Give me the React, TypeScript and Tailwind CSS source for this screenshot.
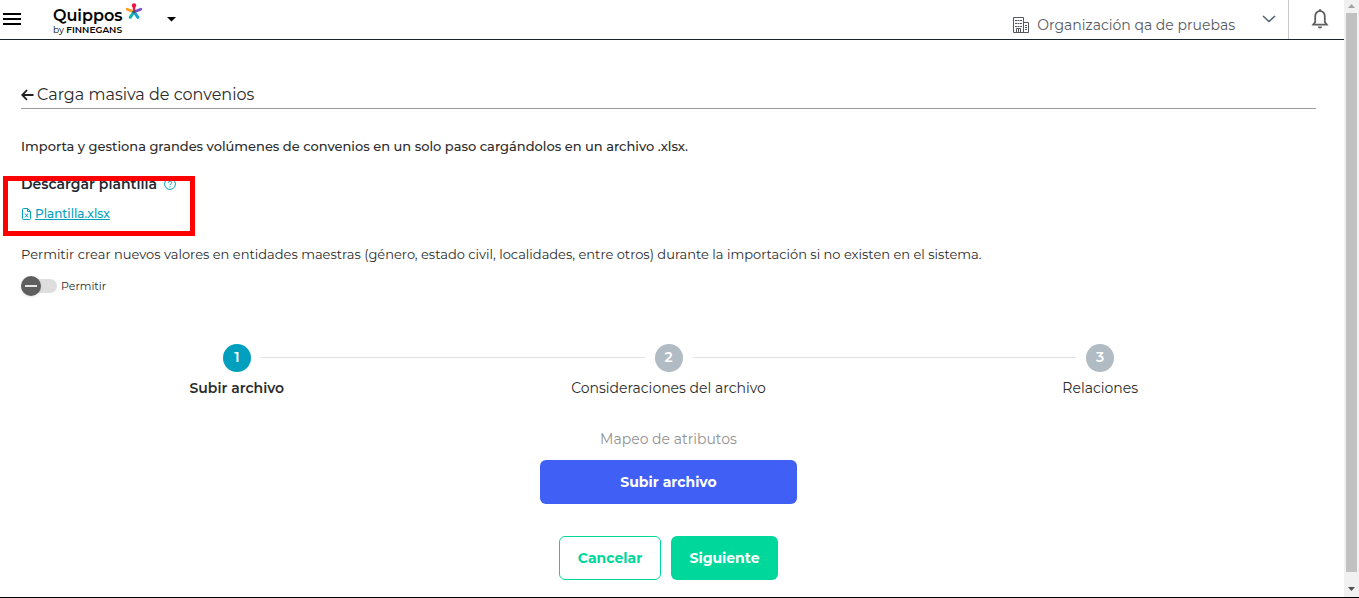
import { useState } from "react";
import type { ReactNode } from "react";
import clsx from "clsx";

const STEPS = ["Subir archivo", "Consideraciones del archivo", "Relaciones"];

const QuipposMark = () => (
  <svg viewBox="0 0 18 18" className="ml-0.5 size-[18px]" fill="none" strokeLinecap="round" aria-hidden="true">
    <path d="M9 8.500L9 3" stroke="#f5143f" strokeWidth="2.400" />
    <circle cx="9" cy="2.500" r="2.200" fill="#f5143f" />
    <path d="M8.500 8.700L2.200 6.300" stroke="#ff9d1c" strokeWidth="2.800" />
    <path d="M9.500 8.700L15.800 6.300" stroke="#7b4fc9" strokeWidth="2.800" />
    <path d="M8.600 9.300L5.200 14.300" stroke="#12b5a6" strokeWidth="3" />
    <path d="M9.400 9.300L12.900 14.300" stroke="#12a5cc" strokeWidth="3" />
    <circle cx="9" cy="8.700" r="1.500" fill="#5c3f66" />
  </svg>
);

const BuildingIcon = () => (
  <svg viewBox="0 0 16 16" className="size-4" fill="none" stroke="#54585c" aria-hidden="true">
    <path d="M0.500 15.500V0.500H10.500V15.500M10.500 5.500H15.500V15.500H0.500M3.500 15.500V11.500H7.500V15.500M5.500 11.500V15.500" />
    <path d="M2 3.500H9M2 6.500H9M2 9.500H9" strokeDasharray="2 0.500" />
    <path d="M12 8.500H14M12 10.500H14M12 12.500H14" />
  </svg>
);

const BellIcon = () => (
  <svg viewBox="0 0 18 20" className="h-5 w-[18px]" aria-hidden="true">
    <path
      d="M9 1.800C5.800 2.200 4.200 4.600 4.200 7.600V13L2.200 15.700H15.800L13.800 13V7.600C13.800 4.600 12.200 2.200 9 1.800Z"
      fill="none"
      stroke="#5f5f5f"
      strokeWidth="1.800"
    />
    <path d="M8 0.300H10V2.500H8ZM6.800 17.500H11.200C11 18.800 10.200 19.500 9 19.500S7 18.800 6.800 17.500Z" fill="#5f5f5f" />
  </svg>
);

const Header = () => (
  <header className="flex h-10 items-stretch border-b border-[#1d242c]">
    <button type="button" aria-label="Menú" className="flex w-6 items-center pb-px pl-[3px]">
      <svg viewBox="0 0 18 12" className="h-3 w-[18px]" aria-hidden="true">
        <path d="M0 1H18M0 6H18M0 11H18" stroke="#000" strokeWidth="2" />
      </svg>
    </button>
    <a href="#inicio" className="ml-[29px] flex pt-[3px] text-black">
      <span className="flex flex-col pt-1">
        <span className="text-base leading-[18px] font-semibold">Quippos</span>
        <span className="text-[9px] leading-[9px]">
          by <span className="font-semibold">FINNEGANS</span>
        </span>
      </span>
      <QuipposMark />
    </a>
    <button type="button" aria-label="Cambiar producto" className="ml-6 flex items-center">
      <svg viewBox="0 0 10 5" className="h-[5px] w-[10px]" aria-hidden="true">
        <path d="M0 0H9L4.500 4.500Z" fill="#000" />
      </svg>
    </button>
    <div className="ml-auto flex">
      <button type="button" className="flex items-center gap-2 pt-2.5 text-sm text-[#56595e]">
        <BuildingIcon />
        Organización qa de pruebas
      </button>
      <button type="button" aria-label="Ver organizaciones" className="w-[53px] pb-px pl-[27px]">
        <svg viewBox="0 0 14 8" className="h-2 w-[14px]" fill="none" stroke="#4d5f70" strokeWidth="1.500" aria-hidden="true">
          <path d="M1 1L7 6.500L13 1" />
        </svg>
      </button>
      <button
        type="button"
        aria-label="Notificaciones"
        className="flex w-14 items-center justify-center border-l border-[#c9c9c9] pb-px pl-1.5"
      >
        <BellIcon />
      </button>
    </div>
  </header>
);

const Stepper = ({ current }: { current: number }) => (
  <ol className="mt-12 grid grid-cols-3">
    {STEPS.map((label, i) => (
      <li key={label} className="flex flex-col items-center gap-1.5">
        <div className="flex w-full items-center">
          <span className={clsx("mb-0.5 h-px flex-1", i > 0 && "bg-[#e2e2e2]")} />
          <span
            className={clsx(
              "mx-2.5 flex size-7 items-center justify-center rounded-full pb-0.5 text-sm font-semibold text-white",
              i === current ? "bg-[#009fbd]" : "bg-[#b0bbc4]",
            )}
          >
            {i + 1}
          </span>
          <span className={clsx("mb-0.5 h-px flex-1", i < STEPS.length - 1 && "bg-[#e2e2e2]")} />
        </div>
        <span className={clsx("text-sm leading-5", i === current && "font-semibold")}>{label}</span>
      </li>
    ))}
  </ol>
);

const ActionButton = ({ className, children }: { className: string; children: ReactNode }) => (
  <button type="button" className={clsx("h-11 rounded-md text-sm font-bold", className)}>
    {children}
  </button>
);

// barra de desplazamiento
const ScrollRail = () => (
  <div className="flex w-[15px] shrink-0 flex-col items-center bg-[#f1f1f1]" aria-hidden="true">
    <svg viewBox="0 0 15 13" className="h-[13px] w-[15px]">
      <path d="M4 8H11L7.500 4Z" fill="#a3a3a3" />
    </svg>
    <div className="w-[11px] flex-1 bg-[#c1c1c1]" />
    <svg viewBox="0 0 15 25" className="h-[25px] w-[15px]">
      <path d="M4 15H11L7.500 19Z" fill="#505050" />
    </svg>
  </div>
);

export default function App() {
  const [allow, setAllow] = useState(false);

  return (
    <div className="flex min-h-screen border-b border-black bg-white font-['Montserrat','Inter',sans-serif] text-[#2b2b2b]">
      <div className="min-w-0 flex-1">
        <Header />
        <main className="pt-10 pr-7 pb-4 pl-[21px]">
          <div className="flex h-[29px] items-center gap-[3px] border-b border-[#9c9aa3] pt-0.5">
            <button type="button" aria-label="Volver">
              <svg viewBox="0 0 13 12" className="h-3 w-[13px]" fill="none" stroke="#222" strokeWidth="1.800" aria-hidden="true">
                <path d="M12.500 6H1.500M6 1.200L1.200 6L6 10.800" />
              </svg>
            </button>
            <h1 className="text-base">Carga masiva de convenios</h1>
          </div>

          <p className="mt-[27px] text-[13px] leading-5 font-medium">
            Importa y gestiona grandes volúmenes de convenios en un solo paso cargándolos en un archivo .xlsx.
          </p>

          <section className="relative mt-[18px]">
            <h2 className="flex items-center gap-[7px] text-sm leading-5 font-semibold text-[#1f2733]">
              Descargar plantilla
              <svg viewBox="0 0 12 12" className="size-3" fill="none" stroke="#009fbd" aria-hidden="true">
                <circle cx="6" cy="6" r="5.400" />
                <path d="M4.300 4.800C4.300 2.600 7.700 2.600 7.700 4.700C7.700 5.900 6 5.800 6 7.200M6 8.200V9.300" />
              </svg>
            </h2>
            <a href="#plantilla" className="mt-2.5 flex w-fit items-center gap-[3px] text-xs leading-5 font-medium text-[#009fbd]">
              <svg viewBox="0 0 11 12" className="h-3 w-[11px]" fill="none" stroke="#009fbd" aria-hidden="true">
                <path d="M1.500 1.500Q1.500 0.500 2.500 0.500H6.500L9.500 3.500V10.500Q9.500 11.500 8.500 11.500H2.500Q1.500 11.500 1.500 10.500ZM6.500 0.500V3.500H9.500M4 5.500L7 9.500M7 5.500L4 9.500" />
              </svg>
              <span className="underline">Plantilla.xlsx</span>
            </a>
            <div className="pointer-events-none absolute top-0.5 -left-[18px] h-[60px] w-[192px] border-5 border-[#fe0000]" />
          </section>

          <p className="mt-5 text-[13px] leading-5">
            Permitir crear nuevos valores en entidades maestras (género, estado civil, localidades, entre otros) durante
            la importación si no existen en el sistema.
          </p>

          <label className="mt-3 flex h-5 w-fit items-center gap-1 text-[11px]">
            <input
              type="checkbox"
              checked={allow}
              onChange={e => setAllow(e.target.checked)}
              className="relative h-[14px] w-9 appearance-none rounded-full bg-[#dedede] before:absolute before:-top-[3px] before:left-0 before:size-5 before:rounded-full before:bg-[#5e5e5e] before:shadow-sm after:absolute after:top-1.5 after:left-1 after:h-0.5 after:w-3 after:bg-[#e6e6e6] checked:before:left-4 checked:after:left-5"
            />
            Permitir
          </label>

          <Stepper current={0} />

          <div className="mt-[31px] flex flex-col items-center">
            <p className="text-sm leading-5 text-[#929292]">Mapeo de atributos</p>
            <ActionButton className="mt-[11px] w-[257px] bg-[#3f5ff5] text-white">Subir archivo</ActionButton>
            <div className="mt-8 flex gap-2.5">
              <ActionButton className="w-[102px] border border-[#00d79b] text-[#00d79b]">Cancelar</ActionButton>
              <ActionButton className="w-[107px] bg-[#00d79b] text-white">Siguiente</ActionButton>
            </div>
          </div>
        </main>
      </div>
      <ScrollRail />
    </div>
  );
}
